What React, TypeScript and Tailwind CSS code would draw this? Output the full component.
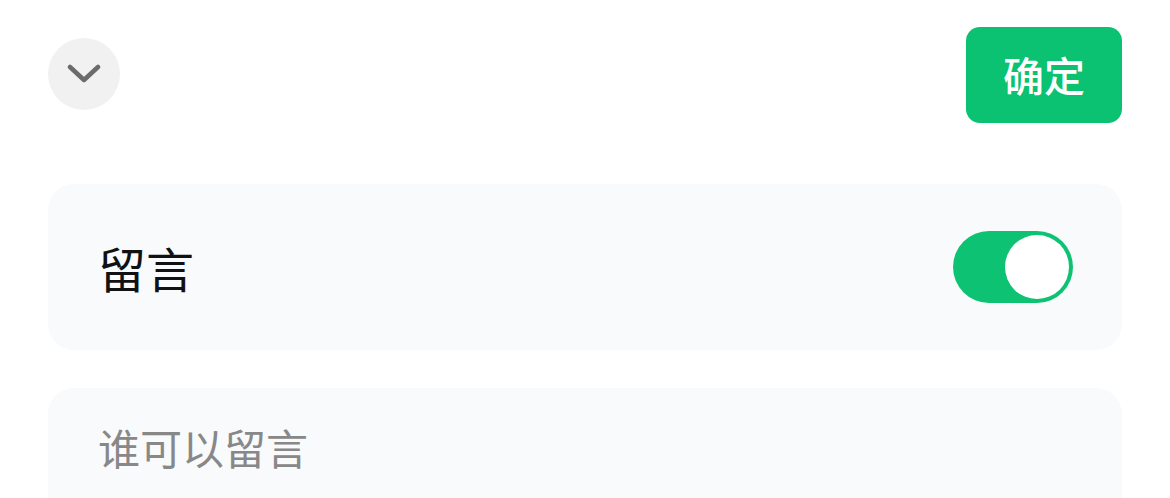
import { useState } from 'react';

const font = '"Noto Sans CJK SC", "Noto Sans", sans-serif';

function ChevronDown() {
  return (
    <svg width="34" height="20" viewBox="0 0 34 20" fill="none">
      <path d="M3 3 L17 16 L31 3" stroke="#6b6b6b" strokeWidth="4.5" strokeLinecap="round" strokeLinejoin="round" />
    </svg>
  );
}

function Toggle({ on, onChange }: { on: boolean; onChange: (v: boolean) => void }) {
  return (
    <button
      onClick={() => onChange(!on)}
      className={`flex h-[72px] w-[120px] items-center rounded-full p-1 ${on ? 'justify-end bg-[#0ec273]' : 'justify-start bg-[#e5e5e5]'}`}
    >
      <span className="block h-[64px] w-[64px] rounded-full bg-white" />
    </button>
  );
}

export default function App() {
  const [allowComments, setAllowComments] = useState(true);

  return (
    <div className="h-[498px] w-[1170px] overflow-hidden bg-white" style={{ fontFamily: font }}>
      <div className="flex items-start justify-between pl-[48px] pr-[48px] pt-[27px]">
        <button className="mt-[11px] flex h-[72px] w-[72px] items-center justify-center rounded-full bg-[#f1f1f1]">
          <ChevronDown />
        </button>
        <button className="flex h-[96px] w-[156px] items-center justify-center rounded-[14px] bg-[#0ac271] text-[41px] font-medium text-white">
          确定
        </button>
      </div>

      <div className="mt-[61px] flex flex-col gap-[38px] px-[48px]">
        <div className="flex h-[166px] items-center justify-between rounded-[26px] bg-[#f8fafc] pl-[50px] pr-[49px]">
          <span className="text-[48px] leading-none text-[#111111]">留言</span>
          <Toggle on={allowComments} onChange={setAllowComments} />
        </div>

        <div className="h-[166px] rounded-[26px] bg-[#f8fafc] pl-[50px] pt-[38px]">
          <span className="text-[42px] leading-none text-[#888888]">谁可以留言</span>
        </div>
      </div>
    </div>
  );
}
